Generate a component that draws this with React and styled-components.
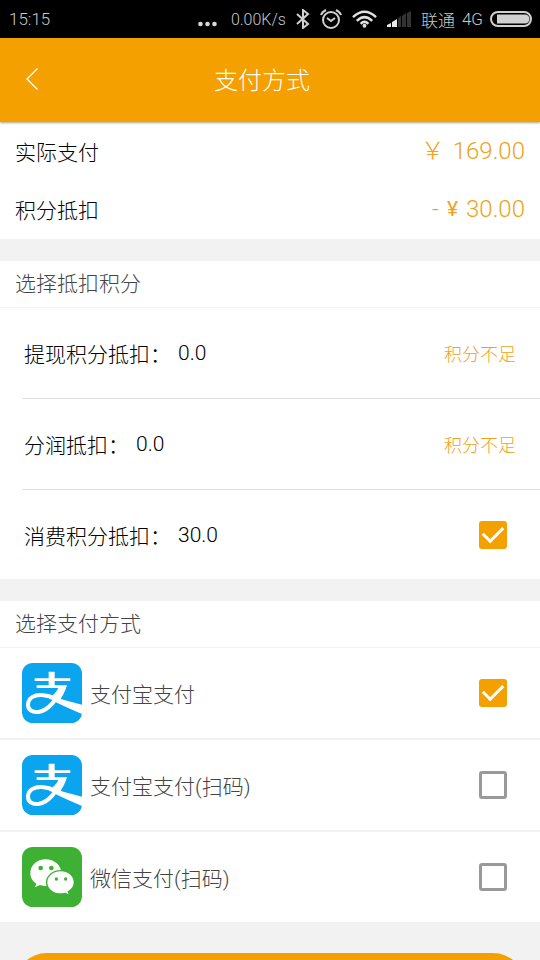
import React, { useState } from "react";
import styled, { createGlobalStyle } from "styled-components";

const deductions = [
  { id: "withdraw", label: "提现积分抵扣：", value: "0.0", enough: false },
  { id: "profit", label: "分润抵扣：", value: "0.0", enough: false },
  { id: "consume", label: "消费积分抵扣：", value: "30.0", enough: true },
];

const methods = [
  { id: "alipay", label: "支付宝支付", Logo: AlipayLogo },
  { id: "alipay-scan", label: "支付宝支付(扫码)", Logo: AlipayLogo },
  { id: "wechat-scan", label: "微信支付(扫码)", Logo: WechatLogo },
];

function AlipayLogo() {
  return (
    <Logo viewBox="0 0 180 180" aria-hidden="true">
      <rect width="180" height="180" rx="32" fill="#0aa5ee" />
      <path d="M80 26h18v20h47v8H98v13h37q-9 29-25 49-13-4-30-9 21-15 29-32H44v-8h36V54H38v-8h42z" fill="#fff" />
      <path
        d="M118 72C107 106 82 142 49 147C29 149 18 139 18 125C18 104 38 95 59 96C78 97 94 103 110 109"
        fill="none"
        stroke="#fff"
        strokeWidth="12"
      />
      <path d="M75 94q26 9 49 16l56 15v28q-42-17-85-38z" fill="#fff" />
    </Logo>
  );
}

function WechatLogo() {
  return (
    <Logo viewBox="0 0 180 180" aria-hidden="true">
      <rect width="180" height="180" rx="32" fill="#3eb135" />
      <path d="M71 37c-26 0-46 18-46 41 0 14 7 25 18 32l-4 11 15-7q8 3 17 3c26 0 47-17 47-39S97 37 71 37z" fill="#fff" />
      <circle cx="56" cy="63" r="7" fill="#3eb135" />
      <circle cx="88" cy="63" r="7" fill="#3eb135" />
      <path
        d="M116 71c-23 0-42 15-42 35s19 35 42 35q7 0 13-2l14 7-4-12c11-6 18-16 18-28 0-20-18-35-41-35z"
        fill="#fff"
        stroke="#3eb135"
        strokeWidth="4"
      />
      <circle cx="103" cy="96" r="5" fill="#3eb135" />
      <circle cx="131" cy="96" r="5" fill="#3eb135" />
    </Logo>
  );
}

function StatusIcons() {
  return (
    <>
      <svg width="14" height="20" viewBox="0 0 14 20" fill="none" stroke="#d0d0d0" strokeWidth="2">
        <path d="M1 5l11 10-5 4V1l5 4L1 15" />
      </svg>
      <svg width="22" height="20" viewBox="0 0 22 20" fill="none" stroke="#d0d0d0" strokeWidth="2">
        <circle cx="11" cy="11" r="8" />
        <path d="M7 9l4 3 4-3M1 6q1-3 5-5M21 6q-1-3-5-5" />
      </svg>
      <svg width="25" height="18" viewBox="0 0 26 18" fill="none" stroke="#e0e0e0" strokeWidth="2.6">
        <path d="M1 7q12-11 24 0M5 11q8-8 16 0M9 14q4-4 8 0" />
        <circle cx="13" cy="16" r="2" fill="#e0e0e0" stroke="none" />
      </svg>
      <svg width="24" height="16" viewBox="0 0 24 16">
        <path d="M0 16v-2l4-2v4zM5 16v-5l5-3v8z" fill="#e8e8e8" />
        <path d="M11 16V7l3-2v11zM15 16V5l4-3v14zM20 16V2l4-2v16z" fill="#333" />
      </svg>
    </>
  );
}

function App() {
  const [usePoints, setUsePoints] = useState(true);
  const [selected, setSelected] = useState("alipay");

  return (
    <>
      <GlobalStyle />
      <Screen>
        <StatusBar>
          <Clock>15:15</Clock>
          <svg width="19" height="16" viewBox="0 0 19 16" fill="#d8d8d8">
            <circle cx="2.5" cy="13" r="2.3" />
            <circle cx="9.5" cy="13" r="2.3" />
            <circle cx="16.5" cy="13" r="2.3" />
          </svg>
          <Speed>0.00K/s</Speed>
          <StatusIcons />
          <Carrier>
            <span>联通</span>
            <span>4G</span>
            <svg width="42" height="16" viewBox="0 0 42 16">
              <rect x="1" y="1" width="40" height="14" rx="7" fill="none" stroke="#d0d0d0" strokeWidth="2" />
              <path d="M7 3.5h28a4.500 4.500 0 0 1 0 9H7z" fill="#d0d0d0" />
            </svg>
          </Carrier>
        </StatusBar>

        <Header>
          <BackButton type="button" aria-label="返回">
            <svg width="12" height="22" viewBox="0 0 12 22" fill="none" stroke="#fff" strokeWidth="1.3">
              <path d="M11.5.5L1 11l10.5 10.5" />
            </svg>
          </BackButton>
          <Title>支付方式</Title>
        </Header>

        <Content>
          <Summary>
            <SummaryRow>
              <span>实际支付</span>
              <Amount>
                <span>￥</span>
                <span>169.00</span>
              </Amount>
            </SummaryRow>
            <SummaryRow>
              <span>积分抵扣</span>
              <Amount>
                <span>-</span>
                <SmallYen>¥</SmallYen>
                <span>30.00</span>
              </Amount>
            </SummaryRow>
          </Summary>

          <Section>
            <SectionTitle>选择抵扣积分</SectionTitle>
            {deductions.map((item) => (
              <DeductionRow key={item.id} as={item.enough ? "label" : "div"}>
                <span>{item.label}</span>
                <Points>{item.value}</Points>
                {item.enough ? (
                  <Checkbox
                    type="checkbox"
                    checked={usePoints}
                    onChange={() => setUsePoints(!usePoints)}
                  />
                ) : (
                  <Notice>积分不足</Notice>
                )}
              </DeductionRow>
            ))}
          </Section>

          <Section>
            <SectionTitle>选择支付方式</SectionTitle>
            {methods.map(({ id, label, Logo: MethodLogo }) => (
              <MethodRow key={id}>
                <MethodLogo />
                <span>{label}</span>
                <Checkbox
                  type="checkbox"
                  checked={selected === id}
                  onChange={() => setSelected(id)}
                />
              </MethodRow>
            ))}
          </Section>

          <SubmitButton type="button" aria-label="确认支付" />
        </Content>
      </Screen>
    </>
  );
}

export default App;

const GlobalStyle = createGlobalStyle`
  * {
    box-sizing: border-box;
  }
  body {
    margin: 0;
    background: #f2f2f2;
    color: #000;
    font-family: Roboto, "Noto Sans CJK SC", sans-serif;
    font-weight: 300;
    font-size: 21px;
  }
`;

const Screen = styled.div`
  display: flex;
  flex-direction: column;
  height: 100vh;
`;

const StatusBar = styled.div`
  display: flex;
  flex: none;
  align-items: center;
  gap: 10px;
  height: 38px;
  padding: 0 8px 0 9px;
  background: #000;
  color: #c8c8c8;
  font-size: 17px;
`;

const Clock = styled.span`
  flex: 1;
`;

const Speed = styled.span`
  padding-left: 4px;
  font-size: 16px;
`;

const Carrier = styled.div`
  display: flex;
  align-items: center;
  gap: 7px;
`;

const Header = styled.header`
  display: grid;
  grid-template-columns: 64px 1fr 80px;
  flex: none;
  align-items: center;
  height: 84px;
  padding-bottom: 3px;
  background: #f4a000;
  color: #fff;
  box-shadow: 0 1px 2px rgba(90, 80, 0, 0.5);
  z-index: 1;
`;

const BackButton = styled.button`
  display: flex;
  align-items: center;
  justify-content: center;
  height: 80px;
  padding: 0;
  border: 0;
  background: none;
  cursor: pointer;
`;

const Title = styled.h1`
  margin: 0;
  font-size: 24px;
  font-weight: 300;
  text-align: center;
`;

const Content = styled.main`
  flex: 1;
  min-height: 0;
  overflow-y: auto;
  scrollbar-width: none;
`;

const Summary = styled.section`
  padding-bottom: 1px;
  background: #fff;
`;

const SummaryRow = styled.div`
  display: flex;
  align-items: center;
  justify-content: space-between;
  height: 58px;
  padding: 0 15px;
`;

const Amount = styled.span`
  display: flex;
  align-items: center;
  gap: 8px;
  color: #f0a21a;
  font-size: 24px;
  line-height: 28px;
`;

const SmallYen = styled.span`
  font-size: 21px;
  font-weight: 400;
  line-height: 24px;
`;

const Section = styled.section`
  margin-top: 22px;
  background: #fff;
`;

const SectionTitle = styled.h2`
  display: flex;
  align-items: center;
  height: 47px;
  margin: 0;
  padding: 0 15px;
  border-bottom: 1px solid #f3f3f3;
  color: #444;
  font-size: 21px;
  font-weight: 300;
  line-height: 24px;
`;

const DeductionRow = styled.div`
  display: flex;
  align-items: center;
  height: 91px;
  margin-left: 22px;
  padding-left: 2px;
  border-bottom: 1px solid #e2e2e2;

  &:last-child {
    height: 89px;
    border-bottom: 0;
  }
`;

const Points = styled.span`
  padding-left: 7px;
`;

const Notice = styled.span`
  margin-left: auto;
  padding-right: 24px;
  color: #f0a21a;
  font-size: 18px;
`;

const MethodRow = styled.label`
  display: flex;
  align-items: center;
  gap: 8px;
  height: 92px;
  padding-left: 22px;
  border-bottom: 2px solid #f2f2f2;
  color: #444;

  &:last-child {
    height: 90px;
    border-bottom: 0;
  }
`;

const Logo = styled.svg`
  flex: none;
  width: 60px;
  height: 60px;
`;

const Checkbox = styled.input`
  appearance: none;
  display: grid;
  place-items: center;
  width: 28px;
  height: 28px;
  margin: 0 33px 0 auto;
  border: 3px solid #999;
  border-radius: 3px;
  background: #fff;
  cursor: pointer;

  &:checked {
    border-color: #f4a000;
    background: #f4a000;
  }

  &:checked::after {
    content: "";
    width: 9px;
    height: 17px;
    margin-top: -6px;
    border: solid #fff;
    border-width: 0 3px 3px 0;
    transform: rotate(45deg);
  }
`;

const SubmitButton = styled.button`
  display: block;
  width: calc(100% - 30px);
  height: 64px;
  margin: 31px auto;
  border: 0;
  border-radius: 32px;
  background: #f4a000;
  cursor: pointer;
`;
